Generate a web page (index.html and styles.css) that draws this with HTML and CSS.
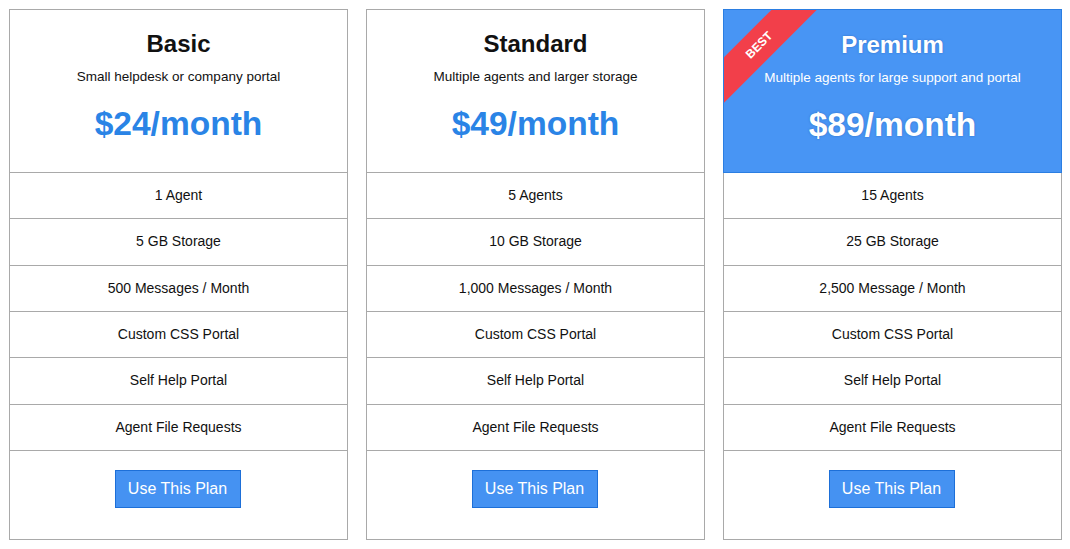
FILE: index.html
```html
<!DOCTYPE html>
<html>
<head>
<meta charset="utf-8">
<link rel="stylesheet" href="styles.css">
</head>
<body>
<div class="plans">
  <div class="card">
    <div class="head">
      <h2 class="title">Basic</h2>
      <p class="sub">Small helpdesk or company portal</p>
      <div class="price">$24/month</div>
    </div>
    <div class="row">1 Agent</div>
    <div class="row">5 GB Storage</div>
    <div class="row">500 Messages / Month</div>
    <div class="row">Custom CSS Portal</div>
    <div class="row">Self Help Portal</div>
    <div class="row">Agent File Requests</div>
    <div class="foot"><button class="btn">Use This Plan</button></div>
  </div>
  <div class="card">
    <div class="head">
      <h2 class="title">Standard</h2>
      <p class="sub">Multiple agents and larger storage</p>
      <div class="price">$49/month</div>
    </div>
    <div class="row">5 Agents</div>
    <div class="row">10 GB Storage</div>
    <div class="row">1,000 Messages / Month</div>
    <div class="row">Custom CSS Portal</div>
    <div class="row">Self Help Portal</div>
    <div class="row">Agent File Requests</div>
    <div class="foot"><button class="btn">Use This Plan</button></div>
  </div>
  <div class="card">
    <div class="head head-best">
      <div class="ribbon">BEST</div>
      <h2 class="title">Premium</h2>
      <p class="sub">Multiple agents for large support and portal</p>
      <div class="price">$89/month</div>
    </div>
    <div class="row">15 Agents</div>
    <div class="row">25 GB Storage</div>
    <div class="row">2,500 Message / Month</div>
    <div class="row">Custom CSS Portal</div>
    <div class="row">Self Help Portal</div>
    <div class="row">Agent File Requests</div>
    <div class="foot"><button class="btn">Use This Plan</button></div>
  </div>
</div>
</body>
</html>
```
FILE: styles.css
```css
html, body {
  margin: 0;
  padding: 0;
  background: #ffffff;
}
body {
  font-family: "Liberation Sans", Arial, sans-serif;
  color: #111;
}
.plans {
  display: grid;
  grid-template-columns: 339px 339px 339px;
  column-gap: 18px;
  padding: 9px;
}
.card {
  border: 1px solid #a9a9a9;
  display: flex;
  flex-direction: column;
  height: 531px;
  box-sizing: border-box;
}
.head {
  position: relative;
  overflow: hidden;
  height: 163px;
  flex: none;
  box-sizing: border-box;
  text-align: center;
  padding-top: 20px;
  border-bottom: 1px solid #a9a9a9;
}
.head-best {
  margin: -1px -1px 0 -1px;
  height: 164px;
  padding-top: 21px;
  background: #4895f4;
  border: 1px solid #2b7ee2;
  color: #fff;
}
.title {
  margin: 0;
  font-size: 24px;
  font-weight: bold;
  line-height: 28px;
}
.sub {
  margin: 10px 0 0;
  font-size: 13.5px;
  line-height: 18px;
}
.price {
  margin-top: 18px;
  font-size: 33.5px;
  font-weight: bold;
  line-height: 40px;
  color: #2a84e6;
}
.head-best .price {
  color: #fff;
  text-shadow: 0 0 2px rgba(20, 70, 150, 0.5);
}
.head-best .title {
  text-shadow: 0 0 2px rgba(20, 70, 150, 0.5);
}
.ribbon {
  position: absolute;
  left: -40px;
  top: 19px;
  width: 150px;
  height: 32px;
  line-height: 33px;
  background: #f23f4a;
  color: #fff;
  font-size: 12px;
  font-weight: bold;
  text-align: center;
  transform: rotate(-45deg);
}
.row {
  height: 46.33px;
  flex: none;
  box-sizing: border-box;
  border-bottom: 1px solid #a9a9a9;
  display: flex;
  align-items: center;
  justify-content: center;
  padding-bottom: 1px;
  font-size: 14px;
  color: #111;
}
.foot {
  flex: 1;
  display: flex;
  justify-content: center;
  align-items: flex-start;
  padding-top: 19px;
}
.btn {
  width: 126px;
  height: 38px;
  margin-left: -2px;
  background: #4592f2;
  border: 1px solid #1d6fd8;
  color: #fff;
  font-family: "Liberation Sans", Arial, sans-serif;
  font-size: 16px;
  padding: 0;
}
```
